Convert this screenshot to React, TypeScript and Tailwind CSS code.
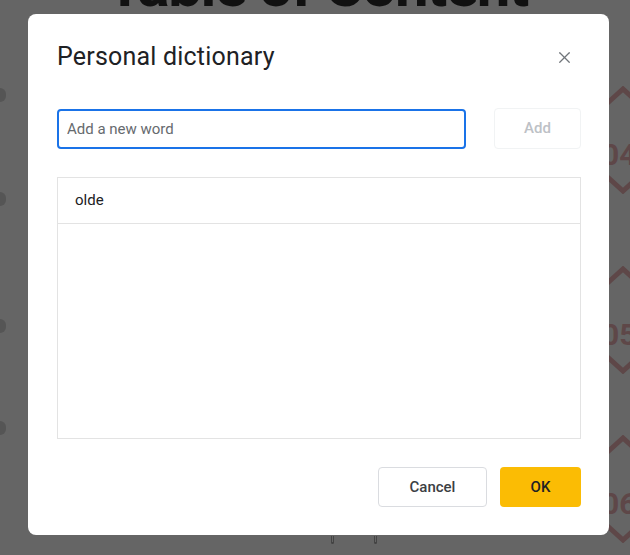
import React from 'react';
import { X } from 'lucide-react';

const font = { fontFamily: 'Roboto, "Liberation Sans", sans-serif' };

function Chevron({ up }: { up?: boolean }) {
  return (
    <svg width="44" height="24" viewBox="0 0 44 24" className="block">
      <path
        d={up ? 'M2 22 L23 3 L44 22' : 'M2 2 L23 21 L44 2'}
        fill="none"
        stroke="#5e4748"
        strokeWidth="5"
      />
    </svg>
  );
}

function SideNumber({ n, top }: { n: string; top: string }) {
  return (
    <div className={`absolute left-[600px] flex flex-col items-start ${top}`}>
      <Chevron up />
      <span className="text-[30px] font-bold leading-none text-[#5e4748] mt-[30px] ml-[2px]">{n}</span>
      <Chevron />
    </div>
  );
}

export default function App() {
  return (
    <div className="relative w-[630px] h-[555px] overflow-hidden bg-[#656565]" style={font}>
      {/* page behind the overlay */}
      <div className="absolute left-[4px] right-0 top-[-44px] text-center text-[60px] font-bold text-[#111] leading-none tracking-tight">
        Table of Content
      </div>
      <div className="absolute left-[-6px] top-[88px] w-[12px] h-[14px] rounded-full bg-[#555]" />
      <div className="absolute left-[-6px] top-[192px] w-[12px] h-[14px] rounded-full bg-[#555]" />
      <div className="absolute left-[-6px] top-[319px] w-[12px] h-[14px] rounded-full bg-[#555]" />
      <div className="absolute left-[-6px] top-[421px] w-[12px] h-[14px] rounded-full bg-[#555]" />
      <SideNumber n="04" top="top-[86px]" />
      <SideNumber n="05" top="top-[266px]" />
      <SideNumber n="06" top="top-[435px]" />
      <div className="absolute left-[331px] top-[536px] w-[3px] h-[8px] rounded-b-full border-b-2 border-l border-r border-[#444]" />
      <div className="absolute left-[374px] top-[536px] w-[3px] h-[8px] rounded-b-full border-b-2 border-l border-r border-[#444]" />

      {/* dialog */}
      <div className="relative ml-[28px] mt-[14px] w-[581px] h-[521px] rounded-[8px] bg-white pl-[29px] pr-[28px] pt-[26px] pb-[28px] flex flex-col">
        <div className="flex items-center justify-between h-[34px]">
          <h2 className="text-[25px] font-normal text-[#202124] tracking-[0.2px]">Personal dictionary</h2>
          <button className="w-[24px] h-[24px] flex items-center justify-center text-[#70757a] mr-[5px]">
            <X className="w-[19px] h-[19px]" strokeWidth={1.6} />
          </button>
        </div>

        <div className="flex items-center gap-[28px] mt-[34px]">
          <input
            className="w-[409px] h-[40px] rounded-[4px] border-2 border-[#1a73e8] px-[8px] text-[15px] text-[#202124] placeholder:text-[#666a6e] outline-none"
            placeholder="Add a new word"
          />
          <button className="w-[87px] h-[41px] rounded-[4px] border border-[#f1f3f4] text-[15px] font-medium text-[#bdc1c6]">
            Add
          </button>
        </div>

        <div className="mt-[28px] h-[262px] border border-[#e3e3e3] flex flex-col">
          <div className="h-[46px] flex items-center px-[17px] border-b border-[#e3e3e3] text-[15px] text-[#202124]">
            olde
          </div>
        </div>

        <div className="mt-auto flex justify-end gap-[13px]">
          <button className="w-[109px] h-[40px] rounded-[4px] border border-[#dadce0] text-[15px] font-medium text-[#3c4043]">
            Cancel
          </button>
          <button className="w-[81px] h-[40px] rounded-[4px] bg-[#fbbc04] text-[15px] font-medium text-[#202124]">
            OK
          </button>
        </div>
      </div>
    </div>
  );
}
